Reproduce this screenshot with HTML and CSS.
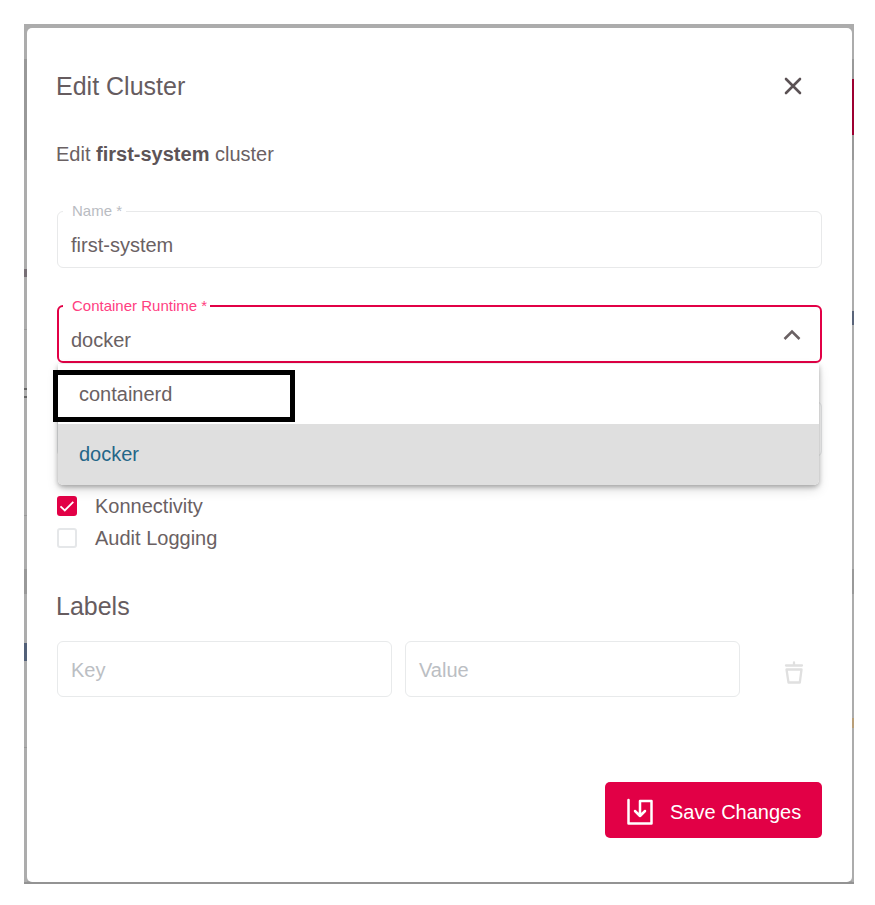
FILE: index.html
```html
<!DOCTYPE html>
<html lang="en">
<head>
<meta charset="utf-8">
<title>Edit Cluster</title>
<link rel="stylesheet" href="styles.css">
</head>
<body>
<div class="backdrop">
  <div class="edge edge-left"></div>
  <main class="dialog">
    <header class="dialog-header">
      <h1 class="title">Edit Cluster</h1>
      <svg class="close" viewBox="0 0 20 20"><path d="M3 3L17 17M17 3L3 17"/></svg>
    </header>
    <p class="intro">Edit <b>first-system</b> cluster</p>
    <fieldset class="field">
      <legend>Name *</legend>
      <span class="value">first-system</span>
    </fieldset>
    <div class="select">
      <fieldset class="field focused">
        <legend>Container Runtime *</legend>
        <span class="value">docker</span>
        <svg class="chevron" viewBox="0 0 18 12"><path d="M1.5 10L9 2.5L16.5 10"/></svg>
      </fieldset>
      <div class="menu">
        <div class="option">containerd</div>
        <div class="option selected">docker</div>
        <div class="highlight"></div>
      </div>
    </div>
    <div class="box covered"></div>
    <div class="checks">
      <label class="check"><span class="tick on"><svg viewBox="0 0 20 20"><path d="M3.5 10.3L7.8 14.5L16.3 5.8"/></svg></span>Konnectivity</label>
      <label class="check"><span class="tick"></span>Audit Logging</label>
    </div>
    <h2 class="title labels-title">Labels</h2>
    <div class="label-row">
      <div class="box">Key</div>
      <div class="box">Value</div>
      <svg class="trash" viewBox="0 0 20 24"><path d="M10 1.5V4M2 4.5H18M2.5 8.5H17.5L15.8 21.5H4.5Z"/></svg>
    </div>
    <footer class="actions">
      <button class="save">
        <svg viewBox="0 0 28 28"><path d="M2.5 2V25.5H25.5V3H14V18M9 13L14 18L19 13"/></svg>
        Save Changes
      </button>
    </footer>
  </main>
  <div class="edge edge-right"></div>
</div>
</body>
</html>
```

FILE: styles.css
```css
* { box-sizing: border-box; }
body {
  margin: 0;
  padding: 24px 21px 21px 24px;
  background: #fff;
  color: #6a6163;
  font: 20px/24px "Liberation Sans", Arial, sans-serif;
}
.backdrop {
  display: grid;
  grid-template-columns: 3px 825px 2px;
  width: 830px;
  height: 860px;
  padding: 4px 0 2px;
  background: linear-gradient(#acacac 0 857px, #939393 858px);
}
.edge-left {
  background: linear-gradient(#acacac 0 31px, #999 31px 132px, #acacac 132px 241px, #776f75 241px 249px, #acacac 249px 301px, #999 301px 302px, #acacac 302px 360px, #666 360px 362px, #acacac 362px 368px, #666 368px 370px, #acacac 370px 487px, #999 487px 488px, #acacac 488px 541px, #999 541px 566px, #acacac 566px 615px, #526078 615px 633px, #acacac 633px 719px, #999 719px 720px, #acacac 720px);
}
.edge-right {
  background: linear-gradient(#acacac 0 31px, #999 31px 51px, #9d0031 51px 107px, #999 107px 132px, #acacac 132px 283px, #596479 283px 297px, #acacac 297px 541px, #999 541px 566px, #acacac 566px 690px, #b99f78 690px 700px, #acacac 700px);
}
.dialog {
  display: flex;
  flex-direction: column;
  padding: 46px 30px 44px;
  border-radius: 5px;
  background: #fff;
}
.dialog-header {
  display: flex;
  align-items: center;
  justify-content: space-between;
  height: 24px;
  padding-right: 19px;
}
svg { display: block; fill: none; stroke: currentColor; stroke-linecap: round; stroke-linejoin: round; }
.close { width: 20px; height: 20px; stroke-width: 2.6; color: #5b5255; }
.title { margin: 0 0 0 -1px; font-size: 25px; line-height: 28px; font-weight: 400; color: #665c5f; }
.intro { margin: 44px 0 36px -1px; }
b { color: #5d5457; }
.field {
  display: flex;
  width: 765px;
  height: 66px;
  margin: 0;
  padding: 0 13px;
  border: 1px solid #e8e9ea;
  border-radius: 6px;
}
.field legend {
  height: 18px;
  margin-left: -8px;
  padding: 0 4px 0 9px;
  color: #b9bcc2;
  font-size: 15px;
  line-height: 18px;
}
.value { flex: 1; padding-top: 13px; }
.select { position: relative; margin-top: 29px; }
.focused { padding: 0 14px 0 12px; border: 2px solid #e20046; }
.focused legend { color: #ff4081; padding-right: 3px; }
.chevron { width: 18px; height: 12px; margin: 14px 5px 0 0; stroke-width: 2.5; stroke-linecap: butt; stroke-linejoin: miter; color: #6a6163; }
.menu {
  position: absolute;
  z-index: 1;
  top: 67px;
  left: 1px;
  width: 761px;
  border-radius: 0 0 5px 5px;
  background: #fff;
  box-shadow: 0 2px 5px rgba(0,0,0,.3), 0 5px 12px rgba(0,0,0,.13);
}
.option { height: 60px; padding: 18px 21px; }
.selected { height: 61px; background: #dfdfdf; color: #246688; border-radius: 0 0 5px 5px; }
.highlight { position: absolute; top: 6px; left: -5px; width: 242px; height: 52px; border: 5px solid #000; }
.box {
  flex: none;
  width: 335px;
  height: 56px;
  padding: 16px 13px;
  border: 1px solid #e8eaeb;
  border-radius: 6px;
  color: #bbbec3;
}
.covered { width: 765px; margin-top: 38px; }
.checks { margin-top: 33px; }
.check { display: flex; align-items: center; gap: 18px; height: 32px; }
.tick { width: 20px; height: 20px; border: 2px solid #e5e7e9; border-radius: 3px; }
.tick.on { border: 0; background: #e20046; color: #fff; }
.tick svg { width: 20px; height: 20px; stroke-width: 1.8; stroke-linecap: butt; stroke-linejoin: miter; }
.labels-title { margin-top: 38px; }
.label-row { display: flex; margin-top: 21px; gap: 13px; }
.trash { width: 20px; height: 24px; margin: 20px 0 0 31px; color: #e0e0e0; stroke-width: 2.3; }
.actions { display: flex; justify-content: flex-end; margin-top: auto; }
.save {
  display: flex;
  align-items: center;
  gap: 16px;
  width: 217px;
  height: 56px;
  padding: 3px 0 0 21px;
  border: 0;
  border-radius: 5px;
  background: #e20046;
  color: #fff;
  font: inherit;
  white-space: nowrap;
}
.save svg { width: 28px; height: 28px; stroke-width: 2.5; }
```
